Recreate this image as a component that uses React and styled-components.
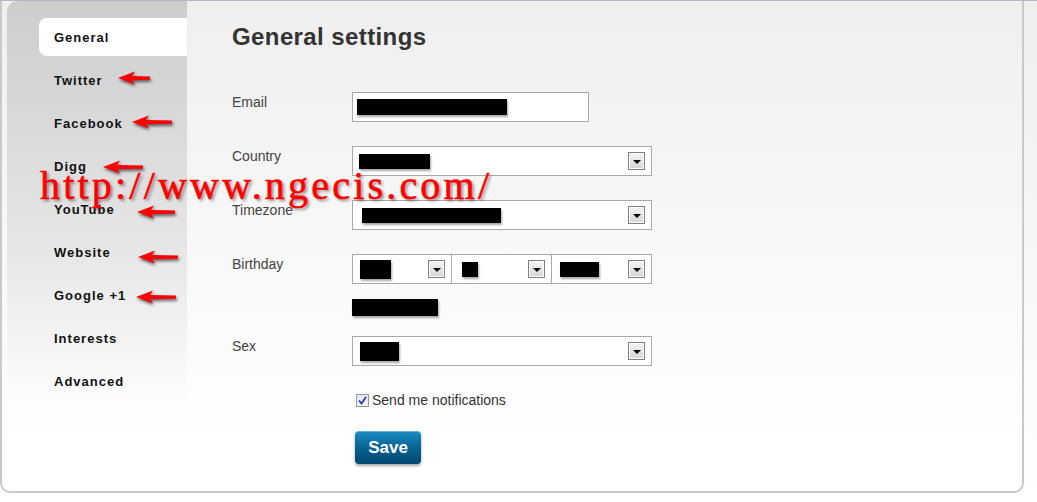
import styled, { createGlobalStyle } from "styled-components";

const GlobalStyle = createGlobalStyle`
  html, body {
    margin: 0;
    padding: 0;
  }
  body {
    width: 1037px;
    height: 502px;
    overflow: hidden;
    background: linear-gradient(#eeeeef, #ffffff);
    font-family: "Liberation Sans", Arial, sans-serif;
  }
`;

const Page = styled.div`
  position: relative;
  width: 1037px;
  height: 502px;
  border-top: 1px solid #b5b8c1;
  box-sizing: border-box;
`;

const Panel = styled.div`
  width: 1024px;
  height: 492px;
  box-sizing: border-box;
  border: 2px solid #c9c9c9;
  border-top: none;
  border-radius: 0 0 10px 10px;
  background: linear-gradient(#efefef, #ffffff 90%);
  padding-left: 5px;
  display: flex;
  align-items: flex-start;
`;

const Sidebar = styled.nav`
  width: 180px;
  height: 412px;
  flex-shrink: 0;
  box-sizing: border-box;
  padding: 17px 0 0 32px;
  border-top-left-radius: 10px;
  background: linear-gradient(#cdcdcd, #e6e6e6 60%, #ffffff);
  display: flex;
  flex-direction: column;
  gap: 5px;
`;

const NavItem = styled.div`
  position: relative;
  height: 38px;
  padding-left: 15px;
  display: flex;
  align-items: center;
  font-size: 13px;
  font-weight: bold;
  letter-spacing: 1px;
  color: #111;
  background: ${(p) => (p.$active ? "#ffffff" : "transparent")};
  border-radius: 8px 0 0 8px;
`;

const ArrowMark = styled.svg`
  position: absolute;
  left: ${(p) => p.$x}px;
  top: ${(p) => 19 + p.$y - 6}px;
  width: ${(p) => p.$w}px;
  height: 12px;
  overflow: visible;
  filter: drop-shadow(1px 2px 1.5px rgba(0, 0, 0, 0.6));
`;

const Main = styled.main`
  flex: 1;
  padding: 21px 0 0 45px;
`;

const Title = styled.h1`
  margin: 0 0 40px;
  font-size: 24px;
  line-height: 30px;
  font-weight: bold;
  letter-spacing: 0.4px;
  color: #333;
`;

const FormRow = styled.div`
  display: grid;
  grid-template-columns: 120px auto;
  margin-bottom: 24px;
`;

const Label = styled.div`
  padding-top: 2px;
  line-height: 16px;
  font-size: 14px;
  color: #444;
`;

const FieldStack = styled.div`
  display: flex;
  flex-direction: column;
`;

const Box = styled.div`
  position: relative;
  width: ${(p) => p.$w}px;
  height: 30px;
  box-sizing: border-box;
  border: 1px solid #a9a9a9;
  background: #fff;
  display: flex;
  align-items: center;
  & + & {
    margin-left: -1px;
    width: ${(p) => p.$w + 1}px;
  }
`;

const SelectGroup = styled.div`
  display: flex;
`;

const Redact = styled.div`
  width: ${(p) => p.$w}px;
  height: ${(p) => p.$h || 15}px;
  margin-left: ${(p) => p.$x || 0}px;
  background: #000;
  box-shadow: 1px 2px 2px rgba(0, 0, 0, 0.35);
`;

const DropButton = styled.div`
  position: absolute;
  right: 6px;
  top: 5px;
  width: 17px;
  height: 18px;
  box-sizing: border-box;
  border: 1px solid #808080;
  box-shadow: inset 0 0 0 1px #fff;
  background: linear-gradient(#f4f4f4, #d5d5d5);
  display: flex;
  align-items: center;
  justify-content: center;
  &::after {
    content: "";
    border-left: 4px solid transparent;
    border-right: 4px solid transparent;
    border-top: 4px solid #000;
    margin-top: 1px;
  }
`;

const BlackBar = styled.div`
  width: 86px;
  height: 17px;
  margin: 15px 0 -4px;
  background: #000;
  box-shadow: 1px 2px 2px rgba(0, 0, 0, 0.35);
`;

const CheckRow = styled.label`
  display: flex;
  align-items: center;
  gap: 3px;
  height: 16px;
  margin: 26px 0 23px 124px;
  font-size: 14px;
  color: #333;
`;

const CheckBox = styled.span`
  width: 13px;
  height: 13px;
  box-sizing: border-box;
  border: 1px solid #8e9bb3;
  background: linear-gradient(#e4e6ee, #f6f6f8);
  display: flex;
  align-items: center;
  justify-content: center;
`;

const SaveButton = styled.button`
  margin-left: 123px;
  width: 66px;
  height: 33px;
  border: none;
  border-radius: 4px;
  background: linear-gradient(#1b8ec2, #05608f 55%, #00466d);
  box-shadow: 0 2px 3px rgba(0, 0, 0, 0.35), inset 0 1px 0 rgba(255, 255, 255, 0.3);
  color: #fff;
  font-family: "Liberation Sans", Arial, sans-serif;
  font-size: 17px;
  font-weight: bold;
`;

const Watermark = styled.div`
  position: absolute;
  left: 40px;
  top: 165px;
  font-family: "Liberation Serif", "Times New Roman", serif;
  font-size: 40px;
  line-height: 40px;
  letter-spacing: 3.2px;
  color: #ff0000;
  -webkit-text-stroke: 0.6px #ff0000;
  text-shadow: 2px 2px 3px rgba(0, 0, 0, 0.45);
  white-space: nowrap;
  pointer-events: none;
`;

const Arrow = ({ x, y, w = 40 }) => (
  <ArrowMark $x={x} $y={y} $w={w} viewBox={`0 0 ${w} 12`}>
    <path
      d={`M0 6 L17 -0.5 L14 4 L${w} 4.4 L${w} 7.8 L14 8.2 L17 12.5 Z`}
      fill="#ff0000"
    />
  </ArrowMark>
);

const navItems = [
  { label: "General", active: true },
  { label: "Twitter", arrow: { x: 79, y: -2, w: 32 } },
  { label: "Facebook", arrow: { x: 93, y: -1 } },
  { label: "Digg", arrow: { x: 64, y: 1 } },
  { label: "YouTube", arrow: { x: 98, y: 3, w: 38 } },
  { label: "Website", arrow: { x: 99, y: 5 } },
  { label: "Google +1", arrow: { x: 97, y: 2 } },
  { label: "Interests" },
  { label: "Advanced" },
];

const Select = ({ w, r }) => (
  <Box $w={w}>
    <Redact $x={r.x} $w={r.w} $h={r.h} />
    <DropButton />
  </Box>
);

export default function App() {
  return (
    <Page>
      <GlobalStyle />
      <Panel>
        <Sidebar>
          {navItems.map((item) => (
            <NavItem key={item.label} $active={item.active}>
              {item.label}
              {item.arrow && <Arrow {...item.arrow} />}
            </NavItem>
          ))}
        </Sidebar>
        <Main>
          <Title>General settings</Title>
          <FormRow>
            <Label>Email</Label>
            <Box $w={237}>
              <Redact $x={4} $w={150} $h={16} />
            </Box>
          </FormRow>
          <FormRow>
            <Label>Country</Label>
            <Select w={300} r={{ x: 6, w: 71 }} />
          </FormRow>
          <FormRow>
            <Label>Timezone</Label>
            <Select w={300} r={{ x: 9, w: 139 }} />
          </FormRow>
          <FormRow>
            <Label>Birthday</Label>
            <FieldStack>
              <SelectGroup>
                <Select w={100} r={{ x: 7, w: 31, h: 19 }} />
                <Select w={100} r={{ x: 10, w: 16 }} />
                <Select w={100} r={{ x: 8, w: 39 }} />
              </SelectGroup>
              <BlackBar />
            </FieldStack>
          </FormRow>
          <FormRow>
            <Label>Sex</Label>
            <Select w={300} r={{ x: 7, w: 39, h: 19 }} />
          </FormRow>
          <CheckRow>
            <CheckBox>
              <svg width="9" height="9" viewBox="0 0 9 9">
                <path d="M1 4.5 L3.5 7.5 L8 1" fill="none" stroke="#2b3fa8" strokeWidth="1.8" />
              </svg>
            </CheckBox>
            Send me notifications
          </CheckRow>
          <SaveButton>Save</SaveButton>
        </Main>
      </Panel>
      <Watermark>http://www.ngecis.com/</Watermark>
    </Page>
  );
}
